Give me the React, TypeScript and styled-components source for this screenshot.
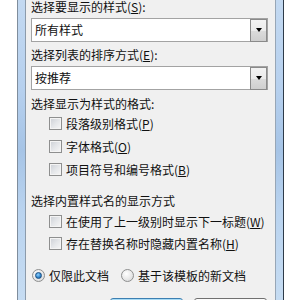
import React from 'react';
import styled, { createGlobalStyle } from 'styled-components';

const GlobalStyle = createGlobalStyle`
    html, body {
        margin: 0;
        background: #ffffff;
        overflow: hidden;
    }
`;

const Screen = styled.div`
    display: flex;
    width: 300px;
    height: 300px;
    overflow: hidden;
    background: #ffffff;
    font-family: "Noto Sans CJK SC", "Noto Sans", sans-serif;
    font-size: 12px;
    color: #101010;
`;

const Outside = styled.div<{ $w: number }>`
    width: ${p => p.$w}px;
    flex-shrink: 0;
`;

const Frame = styled.div<{ $side: 'left' | 'right' }>`
    width: 7px;
    flex-shrink: 0;
    border-left: 1px solid ${p => p.$side === 'left' ? '#7f8d9c' : '#97a6b6'};
    border-right: 1px solid ${p => p.$side === 'left' ? '#8c9bab' : '#2e3b49'};
    background: linear-gradient(180deg, #c3d9f1 0%, #b6d0ee 30%, #a6c4e6 50%, #b9d3ef 70%, #c6dcf2 100%);
`;

const Panel = styled.div`
    width: 237px;
    flex-shrink: 0;
    background: #f0f0f0;
    padding: 0 7px 0 5px;
    display: flex;
    flex-direction: column;
`;

const Label = styled.div<{ $top: number }>`
    flex-shrink: 0;
    height: 13px;
    line-height: 13px;
    margin-top: ${p => p.$top}px;
    white-space: nowrap;
`;

const Combo = styled.div<{ $top: number }>`
    flex-shrink: 0;
    height: 22px;
    margin-top: ${p => p.$top}px;
    border: 1px solid #a3a3a3;
    background: #ffffff;
    display: flex;
    align-items: center;
`;

const ComboText = styled.span`
    flex: 1;
    padding-left: 3px;
    line-height: 14px;
`;

const DropButton = styled.div`
    width: 15px;
    height: 21px;
    border: 1px solid #8a8a8a;
    background: linear-gradient(180deg, #f3f3f3 0%, #ebebeb 50%, #dcdcdc 51%, #cfcfcf 100%);
    display: flex;
    align-items: center;
    justify-content: center;
`;

const Arrow = styled.div`
    width: 0;
    height: 0;
    border-left: 3.5px solid transparent;
    border-right: 3.5px solid transparent;
    border-top: 4px solid #000000;
`;

const Row = styled.div<{ $h: number; $top?: number; $indent?: number }>`
    flex-shrink: 0;
    display: flex;
    align-items: center;
    height: ${p => p.$h}px;
    margin-top: ${p => p.$top ?? 0}px;
    padding-left: ${p => p.$indent ?? 0}px;
    white-space: nowrap;
`;

const CheckBox = styled.span`
    width: 11px;
    height: 11px;
    flex-shrink: 0;
    border: 1px solid #8e8f8f;
    box-shadow: inset 0 0 0 1px #f4f4f4;
    background: linear-gradient(135deg, #cbcfd5 0%, #e4e6e9 50%, #f7f7f7 100%);
    margin-right: 4px;
`;

const Radio = styled.span<{ $checked?: boolean }>`
    width: 11px;
    height: 11px;
    flex-shrink: 0;
    border-radius: 50%;
    border: 1px solid #8e8f8f;
    background: radial-gradient(circle at 40% 35%, #ffffff 0%, #e8e8e8 55%, #cfd2d6 100%);
    display: flex;
    align-items: center;
    justify-content: center;
    margin-right: 4px;

    &::after {
        content: '';
        display: ${p => p.$checked ? 'block' : 'none'};
        width: 5px;
        height: 5px;
        border-radius: 50%;
        border: 1px solid #1b4f82;
        background: radial-gradient(circle at 40% 35%, #8fd0ff 0%, #2d82c8 60%, #17508c 100%);
    }
`;

const RadioText = styled.span`
    margin-right: 12px;
`;

const ButtonBar = styled.div`
    flex-shrink: 0;
    display: flex;
    justify-content: flex-end;
    gap: 11px;
    margin-top: 12px;
    padding-right: 1px;
`;

const Button = styled.div<{ $primary?: boolean }>`
    width: 71px;
    height: 21px;
    border-radius: 3px;
    border: 1px solid ${p => p.$primary ? '#3c7fb1' : '#707070'};
    box-shadow: inset 0 0 0 1px ${p => p.$primary ? '#a9dcf6' : '#fcfcfc'};
    background: ${p => p.$primary
        ? 'linear-gradient(180deg, #eaf6fd 0%, #d9f0fc 50%, #bee6fd 51%, #a7d9f5 100%)'
        : 'linear-gradient(180deg, #f2f2f2 0%, #ebebeb 50%, #dddddd 51%, #cfcfcf 100%)'};
`;

export default function App() {
    return (
        <Screen>
            <GlobalStyle />
            <Outside $w={17} />
            <Frame $side="left" />
            <Panel>
                <Label $top={0}>选择要显示的样式(<u>S</u>):</Label>
                <Combo $top={5}>
                    <ComboText>所有样式</ComboText>
                    <DropButton><Arrow /></DropButton>
                </Combo>

                <Label $top={6}>选择列表的排序方式(<u>E</u>):</Label>
                <Combo $top={5}>
                    <ComboText>按推荐</ComboText>
                    <DropButton><Arrow /></DropButton>
                </Combo>

                <Label $top={7}>选择显示为样式的格式:</Label>
                <Row $h={23} $top={2} $indent={18}>
                    <CheckBox />段落级别格式(<u>P</u>)
                </Row>
                <Row $h={23} $indent={18}>
                    <CheckBox />字体格式(<u>O</u>)
                </Row>
                <Row $h={23} $indent={18}>
                    <CheckBox />项目符号和编号格式(<u>B</u>)
                </Row>

                <Label $top={13}>选择内置样式名的显示方式</Label>
                <Row $h={22} $top={3} $indent={18}>
                    <CheckBox />在使用了上一级别时显示下一标题(<u>W</u>)
                </Row>
                <Row $h={22} $indent={18}>
                    <CheckBox />存在替换名称时隐藏内置名称(<u>H</u>)
                </Row>

                <Row $h={22} $top={10} $indent={1}>
                    <Radio $checked />
                    <RadioText>仅限此文档</RadioText>
                    <Radio />
                    <RadioText>基于该模板的新文档</RadioText>
                </Row>

                <ButtonBar>
                    <Button $primary />
                    <Button />
                </ButtonBar>
            </Panel>
            <Frame $side="right" />
            <Outside $w={17} />
        </Screen>
    );
}
